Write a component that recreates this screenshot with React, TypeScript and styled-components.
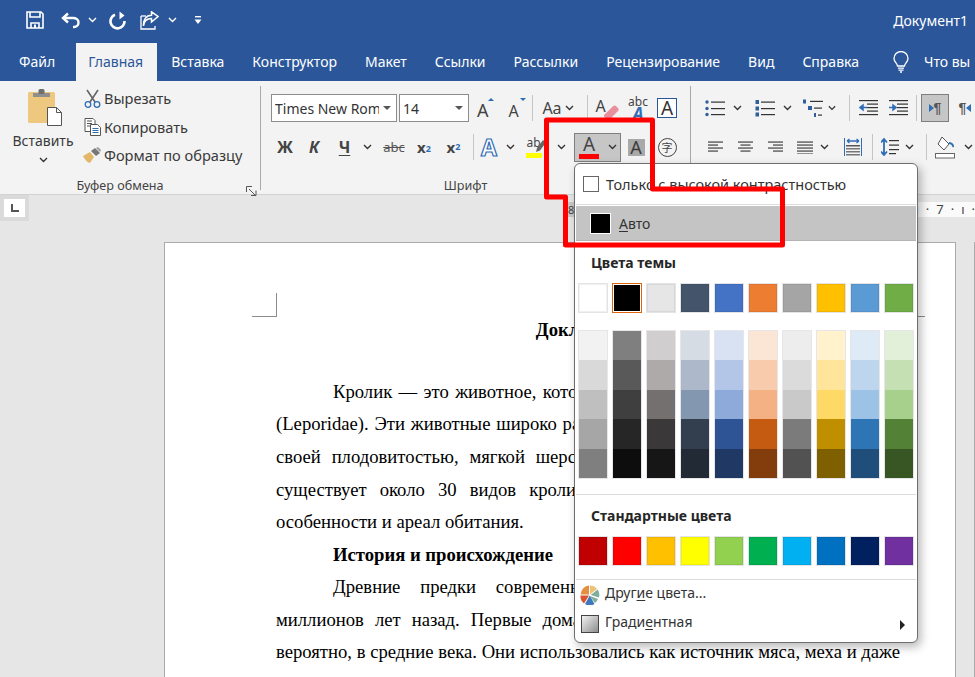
import * as React from "react";
import styled, { createGlobalStyle } from "styled-components";

const UI_FONT = `"Noto Sans", "Open Sans", sans-serif`;
const BLUE = "#2b579a";
const ICON_BLUE = "#2f6db5";
const DARK = "#444444";

const GlobalStyle = createGlobalStyle`
  html, body {
    margin: 0;
    padding: 0;
    overflow: hidden;
    background: #e6e6e6;
  }
`;

const Window = styled.div`
  position: relative;
  width: 975px;
  height: 677px;
  overflow: hidden;
  display: flex;
  flex-direction: column;
  font-family: ${UI_FONT};
  color: #3a3a3a;
`;

/* title bar */
const TitleBar = styled.div`
  flex: none;
  box-sizing: border-box;
  height: 43px;
  background: ${BLUE};
  display: flex;
  align-items: center;
  padding: 0 7px 3px 0;
`;

const QuickSlot = styled.div<{ $w: number; $ml?: number }>`
  flex: none;
  width: ${p => p.$w}px;
  margin-left: ${p => p.$ml || 0}px;
  display: flex;
  justify-content: center;
  align-items: center;
`;

const DocName = styled.div`
  margin-left: auto;
  color: #fff;
  font-size: 14px;
`;

/* tabs */
const TabBar = styled.div`
  flex: none;
  height: 38px;
  background: ${BLUE};
  display: flex;
  padding-left: 5px;
  overflow: hidden;
`;

const Tab = styled.div<{ $active?: boolean }>`
  flex: none;
  display: flex;
  align-items: center;
  padding: ${p => (p.$active ? "0 14px 1px 12px" : "0 14px 1px")};
  font-size: 14px;
  white-space: nowrap;
  color: ${p => (p.$active ? BLUE : "#fff")};
  background: ${p => (p.$active ? "#f3f3f3" : "transparent")};
  margin-left: ${p => (p.$active ? "7px" : "0")};
`;

const TabIcon = styled.div`
  flex: none;
  display: flex;
  align-items: center;
  margin-left: 19px;
`;

/* ribbon */
const Ribbon = styled.div`
  flex: none;
  height: 114px;
  background: #f3f3f3;
  border-bottom: 1px solid #d2d2d2;
  box-sizing: border-box;
  display: flex;
`;

const Group = styled.div<{ $w: number; $pl?: number }>`
  position: relative;
  flex: none;
  box-sizing: border-box;
  width: ${p => p.$w}px;
  padding-left: ${p => p.$pl || 0}px;
  margin: 5px 0 5px;
`;

const GroupDivider = styled.div`
  flex: none;
  width: 1px;
  margin: 5px 0 4px;
  background: #a9a9a9;
`;

const GroupLabel = styled.div<{ $w: number }>`
  position: absolute;
  top: 91px;
  left: 0;
  width: ${p => p.$w}px;
  text-align: center;
  font-size: 12.6px;
  line-height: 17px;
  color: #444;
`;

const Launcher = styled.div`
  position: absolute;
  top: 94px;
  right: 3px;
  width: 11px;
  height: 11px;
`;

const ClipboardBody = styled.div`
  display: flex;
`;

const PasteButton = styled.div`
  flex: none;
  width: 76px;
  margin-left: 5px;
  padding-top: 2px;
  display: flex;
  flex-direction: column;
  align-items: center;
  font-size: 14px;
`;

const PasteIconWrap = styled.div`
  margin-left: 6px;
  height: 38px;
`;

const PasteLabel = styled.div`
  margin: 3px 0 4px;
  line-height: 24px;
`;

const ClipboardList = styled.div`
  margin: -2px 0 0 -1px;
  display: flex;
  flex-direction: column;
`;

const ClipboardItem = styled.div`
  height: 28.5px;
  display: flex;
  align-items: center;
  font-size: 14.6px;
  white-space: nowrap;
`;

const ClipIcon = styled.div`
  flex: none;
  width: 24px;
  display: flex;
  justify-content: center;
`;

const ToolRow = styled.div<{ $top: number }>`
  display: flex;
  align-items: center;
  height: 28px;
  margin-top: ${p => p.$top}px;
`;

const Slot = styled.div<{ $w: number; $ml?: number }>`
  flex: none;
  width: ${p => p.$w}px;
  height: 28px;
  margin-left: ${p => p.$ml || 0}px;
  display: flex;
  align-items: center;
  justify-content: center;
`;

const Sep = styled.div`
  flex: none;
  width: 1px;
  height: 26px;
  background: #c6c6c6;
`;

const ComboBox = styled.div<{ $w: number; $ml?: number }>`
  flex: none;
  box-sizing: border-box;
  width: ${p => p.$w}px;
  height: 28px;
  margin-left: ${p => p.$ml || 0}px;
  padding: 0 5px 0 3px;
  border: 1px solid #8c8c8c;
  background: #fff;
  display: flex;
  align-items: center;
  font-size: 14px;
  color: #333;
`;

const ComboText = styled.div`
  flex: 1;
  overflow: hidden;
  white-space: nowrap;
`;

const ComboCaret = styled.div`
  flex: none;
  width: 0;
  height: 0;
  margin-left: 4px;
  border-left: 4px solid transparent;
  border-right: 4px solid transparent;
  border-top: 4px solid #555;
`;

const Glyph = styled.span<{
  $size: number;
  $bold?: boolean;
  $italic?: boolean;
  $color?: string;
}>`
  font-size: ${p => p.$size}px;
  line-height: 1;
  font-weight: ${p => (p.$bold ? 700 : 400)};
  font-style: ${p => (p.$italic ? "italic" : "normal")};
  color: ${p => p.$color || DARK};
`;

const Underlined = styled.span`
  text-decoration: underline;
  text-underline-offset: 2px;
`;

const Struck = styled.span`
  font-size: 13px;
  color: #555;
  text-decoration: line-through;
`;

const ScriptDigit = styled.span`
  font-size: 9px;
  font-weight: 700;
  color: ${ICON_BLUE};
`;

const SuperDigit = styled(ScriptDigit)`
  align-self: flex-start;
  margin-top: 7px;
`;

const SubDigit = styled(ScriptDigit)`
  align-self: flex-end;
  margin-bottom: 6px;
`;

const GrowWrap = styled.div`
  position: relative;
  width: 17px;
  height: 22px;
  display: flex;
  align-items: flex-end;
`;

const GrowCaret = styled.div<{ $down?: boolean }>`
  position: absolute;
  top: 1px;
  right: 0;
  width: 0;
  height: 0;
  border-left: 3px solid transparent;
  border-right: 3px solid transparent;
  border-bottom: ${p => (p.$down ? "0" : `3px solid ${ICON_BLUE}`)};
  border-top: ${p => (p.$down ? `3px solid ${ICON_BLUE}` : "0")};
`;

const BoxedA = styled.div`
  box-sizing: border-box;
  width: 20px;
  height: 20px;
  border: 1px solid ${BLUE};
  background: #fff;
  display: flex;
  align-items: center;
  justify-content: center;
  font-size: 19px;
  line-height: 1;
  color: #333;
`;

const ShadedA = styled.div`
  width: 17px;
  height: 17px;
  background: #a9a9a9;
  display: flex;
  align-items: center;
  justify-content: center;
  font-size: 18px;
  line-height: 1;
  color: #3c3c3c;
`;

const EffectA = styled.span`
  font-size: 23px;
  line-height: 1;
  font-weight: 700;
  color: #fff;
  -webkit-text-stroke: 1.2px ${ICON_BLUE};
`;

const AbcStack = styled.div`
  display: flex;
  flex-direction: column;
  align-items: center;
  line-height: 10px;
  font-size: 12px;
  color: #444;
`;

const AbcBlueA = styled.span`
  font-size: 17px;
  line-height: 13px;
  font-weight: 700;
  font-style: italic;
  color: ${ICON_BLUE};
`;

const StackIcon = styled.div`
  position: relative;
  width: 21px;
  height: 24px;
`;

const SmallText = styled.span<{ $left: number; $top: number; $size: number }>`
  position: absolute;
  left: ${p => p.$left}px;
  top: ${p => p.$top}px;
  font-size: ${p => p.$size}px;
  line-height: 1;
  color: #444;
`;

const HighlightBar = styled.div`
  position: absolute;
  left: 0;
  bottom: 1px;
  width: 16px;
  height: 5px;
  background: #ffff00;
`;

const FontColorButton = styled.div`
  flex: none;
  box-sizing: border-box;
  width: 47px;
  height: 29px;
  margin-left: 8px;
  background: #c6c6c6;
  border: 1px solid #7f7f7f;
  display: flex;
  align-items: center;
  padding-left: 4px;
  gap: 9px;
`;

const FontColorStack = styled.div`
  width: 20px;
  display: flex;
  flex-direction: column;
  align-items: center;
`;

const ColorBar = styled.div`
  width: 20px;
  height: 5px;
  background: #ff0000;
`;

const CircledChar = styled.div`
  box-sizing: border-box;
  width: 19px;
  height: 19px;
  border: 1px solid #444;
  border-radius: 50%;
  display: flex;
  align-items: center;
  justify-content: center;
  font-family: "Noto Sans CJK SC", sans-serif;
  font-size: 11px;
  line-height: 1;
  color: #444;
`;

const PressedButton = styled.div`
  flex: none;
  box-sizing: border-box;
  width: 28px;
  height: 28px;
  margin-left: 4px;
  border: 1px solid #7f7f7f;
  background: #c6c6c6;
  display: flex;
  align-items: center;
  justify-content: center;
`;

const ParaMark = styled.span<{ $color?: string }>`
  font-size: 14px;
  font-weight: 700;
  line-height: 1;
  font-family: "Liberation Sans", sans-serif;
  color: ${p => p.$color || "#555"};
`;

const ParaCaret = styled.span<{ $left?: boolean }>`
  width: 0;
  height: 0;
  border-top: 4px solid transparent;
  border-bottom: 4px solid transparent;
  ${p =>
    p.$left
      ? `border-right: 5px solid ${ICON_BLUE};`
      : `border-left: 5px solid ${ICON_BLUE};`}
`;

/* document area */
const Canvas = styled.div`
  flex: 1;
  min-height: 0;
  background: #e6e6e6;
  display: flex;
  flex-direction: column;
`;

const RulerRow = styled.div`
  flex: none;
  height: 26px;
  display: flex;
  align-items: flex-start;
`;

const TabStopBox = styled.div`
  flex: none;
  box-sizing: border-box;
  width: 29px;
  height: 26px;
  background: #fff;
  border: 4px solid #dadada;
  display: flex;
  align-items: center;
  justify-content: center;
`;

const RulerTrack = styled.div`
  margin-left: auto;
  margin-top: 7px;
  width: 410px;
  height: 15px;
  background: #fafafa;
  display: flex;
  align-items: center;
  font-size: 13px;
  line-height: 1;
  color: #444;
`;

const RulerMargin = styled.div`
  width: 10px;
  height: 100%;
  background: #c8c8c8;
  font-size: 11px;
  line-height: 15px;
  text-indent: 3px;
`;

const RulerTicks = styled.div`
  margin-left: auto;
  width: 58px;
  display: flex;
  justify-content: flex-end;
  gap: 7px;
`;

const PagesRow = styled.div`
  flex: 1;
  min-height: 0;
  display: flex;
  padding: 21px 0 0 164px;
  gap: 18px;
  overflow: hidden;
`;

const Page = styled.div`
  position: relative;
  flex: none;
  box-sizing: border-box;
  width: 792px;
  background: #fff;
  border: 1px solid #ababab;
  border-bottom: 0;
  padding: 71px 55px 0 111px;
`;

const NextPage = styled(Page)`
  width: 40px;
  padding: 0;
`;

const CropMark = styled.div<{ $right?: boolean }>`
  position: absolute;
  top: 50px;
  ${p => (p.$right ? "left: 735px;" : "left: 87px;")}
  width: 24px;
  height: 23px;
  border-bottom: 1px solid #8c8c8c;
  ${p =>
    p.$right ? "border-left: 1px solid #8c8c8c;" : "border-right: 1px solid #8c8c8c;"}
`;

const DocGap = styled.div`
  height: 29.4px;
`;

const DocLine = styled.p<{
  $indent?: boolean;
  $justify?: boolean;
  $bold?: boolean;
  $center?: boolean;
}>`
  margin: 0;
  height: 32.55px;
  line-height: 32.55px;
  font-family: "Liberation Serif", "Times New Roman", serif;
  font-size: 18.67px;
  color: #000;
  font-weight: ${p => (p.$bold ? 700 : 400)};
  text-indent: ${p => (p.$indent ? "57px" : "0")};
  text-align: ${p => (p.$center ? "center" : p.$justify ? "justify" : "left")};
  text-align-last: ${p => (p.$center ? "center" : p.$justify ? "justify" : "left")};
`;

/* colour menu */
const ColorMenu = styled.div`
  position: absolute;
  left: 574px;
  top: 163px;
  box-sizing: border-box;
  width: 344px;
  height: 480px;
  background: #fff;
  border: 1px solid #6e6e6e;
  border-radius: 6px;
  box-shadow: 3px 4px 10px rgba(0, 0, 0, 0.28);
  display: flex;
  flex-direction: column;
  font-size: 14px;
  color: #333;
`;

const ContrastRow = styled.div`
  flex: none;
  box-sizing: border-box;
  height: 40px;
  display: flex;
  align-items: center;
  padding: 0 0 1px 8px;
  gap: 7px;
  white-space: nowrap;
  font-size: 14.5px;
`;

const CheckBox = styled.div`
  flex: none;
  box-sizing: border-box;
  width: 16px;
  height: 16px;
  border: 1px solid #666;
  background: #fff;
`;

const MenuSep = styled.div<{ $mt?: number }>`
  flex: none;
  height: 1px;
  margin: ${p => p.$mt || 0}px 1px 0;
  background: #dcdcdc;
`;

const AutoRow = styled.div`
  flex: none;
  height: 35px;
  margin: 1px 1px 0 1px;
  background: #c4c4c4;
  border-bottom: 1px solid #b4b4b4;
  box-sizing: border-box;
  display: flex;
  align-items: center;
  padding-left: 14px;
  gap: 8px;
`;

const AutoSwatch = styled.div`
  box-sizing: border-box;
  width: 21px;
  height: 21px;
  background: #000;
  border: 1px solid #fff;
`;

const SectionTitle = styled.div<{ $h: number }>`
  flex: none;
  height: ${p => p.$h}px;
  display: flex;
  align-items: center;
  padding-left: 16px;
  font-weight: 700;
  font-size: 14px;
  color: #262626;
`;

const SwatchGrid = styled.div<{ $mt?: number }>`
  flex: none;
  display: grid;
  grid-template-columns: repeat(10, 30px);
  column-gap: 4px;
  margin: ${p => p.$mt || 0}px 0 0 3px;
`;

const Swatch = styled.div<{ $color: string; $selected?: boolean }>`
  box-sizing: border-box;
  height: 30px;
  background: ${p => p.$color};
  border: 1px solid ${p => (p.$selected ? "#e0640c" : "#e3e3e8")};
  box-shadow: ${p =>
    p.$selected ? "inset 0 0 0 1px #fff" : "inset 0 0 0 1px rgba(0, 0, 0, 0.06)"};
`;

const ShadeColumn = styled.div`
  box-sizing: border-box;
  height: 149px;
  border: 1px solid #e6e6ea;
  display: flex;
  flex-direction: column;
`;

const ShadeCell = styled.div<{ $color: string }>`
  flex: 1;
  background: ${p => p.$color};
`;

const ActionRow = styled.div<{ $h: number }>`
  position: relative;
  flex: none;
  height: ${p => p.$h}px;
  display: flex;
  align-items: center;
  padding-left: 4px;
  gap: 5px;
`;

const ActionIcon = styled.div`
  flex: none;
  width: 21px;
  margin-top: 2px;
  display: flex;
  justify-content: center;
`;

const ActionLabel = styled.span`
  margin-bottom: 2px;
`;

const SubmenuArrow = styled.div`
  position: absolute;
  right: 12px;
  top: 13px;
  width: 0;
  height: 0;
  border-top: 5px solid transparent;
  border-bottom: 5px solid transparent;
  border-left: 5px solid #222;
`;

const Annotation = styled.svg`
  position: absolute;
  left: 0;
  top: 0;
  pointer-events: none;
`;

/* icons */
const Chevron: React.FC<{ color?: string }> = ({ color = "#333" }) => (
  <svg width="9" height="6" viewBox="0 0 9 6" fill="none">
    <polyline points="1,1 4.5,4.5 8,1" stroke={color} strokeWidth="1.4" />
  </svg>
);

const SaveIcon = () => (
  <svg width="18" height="18" viewBox="0 0 18 18" fill="none" stroke="#fff" strokeWidth="1.6">
    <path d="M1 1h14l2 2v14H1z" />
    <path d="M4 1v5h10V1" />
    <path d="M5 17v-5h8v5" />
    <path d="M8 13.5h2v3.5H8z" fill="#fff" stroke="none" />
  </svg>
);

const UndoIcon = () => (
  <svg width="20" height="17" viewBox="0 0 20 17" fill="none" stroke="#fff" strokeWidth="2.4">
    <path d="M7 1.5L2 6l5 4.5" />
    <path d="M2 6h10c3 0 5.500 1.800 5.500 4.500S15.500 15 13 15h-1" />
  </svg>
);

const RedoIcon = () => (
  <svg width="18" height="19" viewBox="0 0 18 19" fill="none" stroke="#fff" strokeWidth="2.6">
    <path d="M6 3.800A7 7 0 1 0 15.500 10" />
    <path d="M10.500 0.500v8l5 -4z" fill="#fff" stroke="none" />
  </svg>
);

const ShareIcon = () => (
  <svg width="19" height="19" viewBox="0 0 19 19" fill="none" stroke="#fff" strokeWidth="1.300">
    <path d="M1 5v13h14v-3" />
    <path d="M1 5h5" />
    <path d="M3.500 15c.5-5 3.500-7.500 8-7.500V11L18 5.500 11.500 0.800v3.400C6 4.200 3 9 3.500 15z" strokeWidth="1.500" />
  </svg>
);

const CustomizeIcon = () => (
  <svg width="8" height="9" viewBox="0 0 8 9" fill="#fff">
    <rect x="1" y="0" width="6" height="1.400" />
    <path d="M0.500 3.500h7L4 8z" />
  </svg>
);

const BulbIcon = () => (
  <svg width="18" height="22" viewBox="0 0 18 22" fill="none" stroke="#fff" strokeWidth="1.300">
    <path d="M5.500 15c0-2.500-3.500-4-3.500-7.500a7 7 0 0 1 14 0c0 3.500-3.500 5-3.500 7.500z" />
    <path d="M6 17.200h6M6.500 19.200h5M8 21h2" />
  </svg>
);

const PasteIcon = () => (
  <svg width="36" height="38" viewBox="0 0 36 38">
    <rect x="0" y="4" width="27" height="31" rx="1.500" fill="#edc87e" />
    <path d="M5 5h17v4H5z" fill="#8f8f8f" />
    <rect x="10.500" y="1" width="6" height="5" rx="1.500" fill="#6f6f6f" />
    <path d="M19.500 19.500h9l5 5v13h-14z" fill="#fff" stroke="#555" />
    <path d="M28.500 19.500v5h5" fill="none" stroke="#555" />
  </svg>
);

const ScissorsIcon = () => (
  <svg width="17" height="19" viewBox="0 0 17 19" fill="none">
    <path d="M3 1l8 12M14 1L6 13" stroke="#666" strokeWidth="1.600" />
    <circle cx="4" cy="15.500" r="2.800" stroke={ICON_BLUE} strokeWidth="1.300" />
    <circle cx="13" cy="15.500" r="2.800" stroke={ICON_BLUE} strokeWidth="1.300" />
  </svg>
);

const CopyIcon = () => (
  <svg width="17" height="18" viewBox="0 0 17 18" fill="#fff" stroke="#555">
    <path d="M1 .5h8l2 2v11H1z" />
    <path d="M3 3h5M3 5.500h5M3 8h5" />
    <path d="M6.500 6.500h7l3 3v8h-10z" />
    <path d="M8.500 10.500h6M8.500 12.500h6M8.500 14.500h6" stroke={ICON_BLUE} />
  </svg>
);

const PainterIcon = () => (
  <svg width="18" height="16" viewBox="0 0 18 16">
    <path d="M0 9l7-4 4 5-4 6c-2 0-5-3-7-7z" fill="#e2b769" />
    <path d="M8 4l4-3 5 5-4 3z" fill="#777" />
    <path d="M13 1l2-1 3 3-1 2z" fill="#a0a0a0" />
  </svg>
);

const LauncherIcon = () => (
  <svg width="11" height="11" viewBox="0 0 11 11" fill="none" stroke="#555">
    <path d="M.5 6V.5H6" />
    <path d="M3 3l6 6M5 9.500h5v-5" />
  </svg>
);

const TabStopIcon = () => (
  <svg width="8" height="8" viewBox="0 0 8 8" fill="#555">
    <path d="M0 0h2v6h6v2H0z" />
  </svg>
);

const EraserIcon = () => (
  <svg width="15" height="15" viewBox="0 0 15 15">
    <path d="M0 10L9 1.200c1-1 2.200-1 3.200 0L14 3c.9.900.9 2 0 3l-8 8c-.9.900-2 .9-3 0L0 11.500z" fill="#e8909c" />
  </svg>
);

const PenIcon = () => (
  <svg width="12" height="14" viewBox="0 0 12 14">
    <path d="M1 13l1-4 6-8 3 2.500-6 8z" fill="#666" />
  </svg>
);

const BULLET_LINES = [3, 9.500, 15.500];

const BulletsIcon = () => (
  <svg width="20" height="19" viewBox="0 0 20 19">
    {BULLET_LINES.map(y => (
      <React.Fragment key={y}>
        <circle cx="2" cy={y} r="1.700" fill="#2f5f9e" />
        <rect x="6" y={y - 0.5} width="14" height="1.200" fill="#333" />
      </React.Fragment>
    ))}
  </svg>
);

const NumberingIcon = () => (
  <svg width="20" height="19" viewBox="0 0 20 19">
    {BULLET_LINES.map(y => (
      <React.Fragment key={y}>
        <rect x="0.500" y={y - 2} width="3.500" height="4" fill="#2f5f9e" />
        <rect x="6" y={y - 0.5} width="14" height="1.200" fill="#333" />
      </React.Fragment>
    ))}
  </svg>
);

const MultilevelIcon = () => (
  <svg width="20" height="19" viewBox="0 0 20 19">
    <rect x="0" y="0.500" width="3" height="4" fill="#2f5f9e" />
    <rect x="7" y="1.800" width="13" height="1.200" fill="#333" />
    <rect x="5" y="7" width="4" height="4" fill="#2f5f9e" />
    <rect x="11" y="8.500" width="8" height="1.200" fill="#333" />
    <rect x="11" y="14" width="2" height="4" fill="#2f5f9e" />
    <rect x="15" y="15.500" width="4" height="1.200" fill="#333" />
  </svg>
);

const INDENT_LINES = [0, 3.500, 7, 10.500, 14];

const IndentIcon: React.FC<{ flip?: boolean }> = ({ flip }) => (
  <svg width="19" height="16" viewBox="0 0 19 16">
    {INDENT_LINES.map((y, i) => (
      <rect
        key={y}
        x={i === 0 || i === 4 ? 0 : 8}
        y={y}
        width={i === 0 || i === 4 ? 19 : 11}
        height="1.200"
        fill="#333"
      />
    ))}
    {flip ? (
      <path d="M0 7h3.500V4L8 7.500 3.500 11V8H0z" fill={ICON_BLUE} stroke={ICON_BLUE} strokeWidth=".5" />
    ) : (
      <path d="M8 7H4.500V4L0 7.500 4.500 11V8H8z" fill={ICON_BLUE} stroke={ICON_BLUE} strokeWidth=".5" />
    )}
  </svg>
);

const AlignIcon: React.FC<{ kind: "left" | "center" | "right" | "justify" }> = ({ kind }) => {
  const w = kind === "justify" ? 16 : 15;
  const lines = [0, 3, 6, 9, ...(kind === "justify" ? [12] : [])];
  return (
    <svg width={w} height="13" viewBox={`0 0 ${w} 13`}>
      {lines.map((y, i) => {
        const short = kind !== "justify" && i % 2 === 1;
        const lw = short ? 10 : w;
        const x = kind === "left" || !short ? 0 : kind === "center" ? (w - lw) / 2 : w - lw;
        return <rect key={y} x={x} y={y + 0.5} width={lw} height="1.100" fill="#333" />;
      })}
    </svg>
  );
};

const DistributeIcon = () => (
  <svg width="18" height="18" viewBox="0 0 18 18">
    <path d="M.5 0v18M17.500 0v18" stroke={ICON_BLUE} />
    <path d="M3 3h12M3 3l2.500-2M3 3l2.500 2M15 3l-2.500-2M15 3l-2.500 2" stroke={ICON_BLUE} strokeWidth="1.300" fill="none" />
    <rect x="2" y="7" width="14" height="1.500" fill="#555" />
    <rect x="2" y="10" width="14" height="1.500" fill="#777" />
    <rect x="2" y="13" width="14" height="1.500" fill="#777" />
    <rect x="2" y="16" width="14" height="1.500" fill="#777" />
  </svg>
);

const LineSpacingIcon = () => (
  <svg width="18" height="18" viewBox="0 0 18 18">
    <path d="M3 1v16M0 4.500L3 1l3 3.500M0 13.500L3 17l3-3.500" stroke={ICON_BLUE} strokeWidth="1.800" fill="none" />
    <rect x="8" y="2" width="10" height="1.200" fill="#333" />
    <rect x="8" y="6.500" width="10" height="1.200" fill="#333" />
    <rect x="8" y="11" width="10" height="1.200" fill="#333" />
    <rect x="8" y="15" width="7" height="1.200" fill="#333" />
  </svg>
);

const ShadingIcon = () => (
  <svg width="20" height="23" viewBox="0 0 20 23" fill="none">
    <path d="M7 1l7 7-5 6-6-6z" fill="#fff" stroke="#555" />
    <path d="M14 6c2 0 4.500 1 5 4 .2 1.500-1.500 2-2 0-.3-1-1-2-3-2z" fill={ICON_BLUE} />
    <rect x=".5" y="17.500" width="19" height="4.500" fill="#fff" stroke="#666" />
  </svg>
);

const PaletteIcon = () => (
  <svg width="20" height="20" viewBox="0 0 20 20">
    <path d="M10 9.500V.5a9 9 0 0 1 7 3.400z" fill="#edc37a" />
    <path d="M10.800 10l6.800-5.400a9 9 0 0 1 1.300 8z" fill="#7faf9b" />
    <path d="M10 11l8 3a9 9 0 0 1-3 4z" fill="#7faf9b" />
    <path d="M9.800 10.500L14.500 19a9 9 0 0 1-9.500 0z" fill="#3f78bd" />
    <path d="M9 10.500L4 18.500a9 9 0 0 1-3.500-8z" fill="#d9552e" />
    <path d="M9 9.500H.7A9 9 0 0 1 9 .6z" fill="#e68f42" />
  </svg>
);

const GradientIcon = () => (
  <svg width="18" height="18" viewBox="0 0 18 18">
    <defs>
      <linearGradient id="gradientSwatch" x1="0" y1="0" x2="1" y2="1">
        <stop offset="0" stopColor="#f5f5f5" />
        <stop offset="1" stopColor="#8a8a8a" />
      </linearGradient>
    </defs>
    <rect x=".5" y=".5" width="17" height="17" fill="url(#gradientSwatch)" stroke="#444" />
  </svg>
);

/* data */
const TABS_AFTER = [
  "Вставка",
  "Конструктор",
  "Макет",
  "Ссылки",
  "Рассылки",
  "Рецензирование",
  "Вид",
  "Справка",
];

const THEME_COLORS = [
  "#ffffff",
  "#000000",
  "#e7e6e6",
  "#44546a",
  "#4472c4",
  "#ed7d31",
  "#a5a5a5",
  "#ffc000",
  "#5b9bd5",
  "#70ad47",
];

const THEME_SHADES = [
  ["#f2f2f2", "#d9d9d9", "#bfbfbf", "#a6a6a6", "#7f7f7f"],
  ["#7f7f7f", "#595959", "#3f3f3f", "#262626", "#0d0d0d"],
  ["#d0cece", "#aeaaaa", "#757070", "#3a3838", "#171616"],
  ["#d6dce4", "#adb9ca", "#8497b0", "#333f4f", "#222a35"],
  ["#d9e2f3", "#b4c6e7", "#8eaadb", "#2f5496", "#1f3864"],
  ["#fbe5d5", "#f7cbac", "#f4b183", "#c55a11", "#833c0b"],
  ["#ededed", "#dbdbdb", "#c9c9c9", "#7b7b7b", "#525252"],
  ["#fff2cc", "#fee599", "#ffd965", "#bf8f00", "#7f6000"],
  ["#deeaf6", "#bdd6ee", "#9cc3e5", "#2e75b5", "#1e4e79"],
  ["#e2efd9", "#c5e0b3", "#a8d08d", "#538135", "#375623"],
];

const STANDARD_COLORS = [
  "#c00000",
  "#ff0000",
  "#ffc000",
  "#ffff00",
  "#92d050",
  "#00b050",
  "#00b0f0",
  "#0070c0",
  "#002060",
  "#7030a0",
];

const TitleArea = () => (
  <>
    <TitleBar>
      <QuickSlot $w={18} $ml={26}>
        <SaveIcon />
      </QuickSlot>
      <QuickSlot $w={20} $ml={17}>
        <UndoIcon />
      </QuickSlot>
      <QuickSlot $w={10} $ml={6}>
        <Chevron color="#fff" />
      </QuickSlot>
      <QuickSlot $w={18} $ml={12}>
        <RedoIcon />
      </QuickSlot>
      <QuickSlot $w={19} $ml={13}>
        <ShareIcon />
      </QuickSlot>
      <QuickSlot $w={10} $ml={8}>
        <Chevron color="#fff" />
      </QuickSlot>
      <QuickSlot $w={8} $ml={17}>
        <CustomizeIcon />
      </QuickSlot>
      <DocName>Документ1</DocName>
    </TitleBar>
    <TabBar>
      <Tab>Файл</Tab>
      <Tab $active>Главная</Tab>
      {TABS_AFTER.map(t => (
        <Tab key={t}>{t}</Tab>
      ))}
      <TabIcon>
        <BulbIcon />
      </TabIcon>
      <Tab>Что вы</Tab>
    </TabBar>
  </>
);

const ClipboardGroup = () => (
  <Group $w={260}>
    <ClipboardBody>
      <PasteButton>
        <PasteIconWrap>
          <PasteIcon />
        </PasteIconWrap>
        <PasteLabel>Вставить</PasteLabel>
        <Chevron />
      </PasteButton>
      <ClipboardList>
        <ClipboardItem>
          <ClipIcon>
            <ScissorsIcon />
          </ClipIcon>
          Вырезать
        </ClipboardItem>
        <ClipboardItem>
          <ClipIcon>
            <CopyIcon />
          </ClipIcon>
          Копировать
        </ClipboardItem>
        <ClipboardItem>
          <ClipIcon>
            <PainterIcon />
          </ClipIcon>
          Формат по образцу
        </ClipboardItem>
      </ClipboardList>
    </ClipboardBody>
    <GroupLabel $w={240}>Буфер обмена</GroupLabel>
    <Launcher>
      <LauncherIcon />
    </Launcher>
  </Group>
);

const FontGroup = () => (
  <Group $w={429} $pl={10}>
    <ToolRow $top={8}>
      <ComboBox $w={126}>
        <ComboText>Times New Rom</ComboText>
        <ComboCaret />
      </ComboBox>
      <ComboBox $w={70} $ml={2}>
        <ComboText>14</ComboText>
        <ComboCaret />
      </ComboBox>
      <Slot $w={33}>
        <GrowWrap>
          <Glyph $size={18}>A</Glyph>
          <GrowCaret />
        </GrowWrap>
      </Slot>
      <Slot $w={30}>
        <GrowWrap>
          <Glyph $size={16}>A</Glyph>
          <GrowCaret $down />
        </GrowWrap>
      </Slot>
      <Sep />
      <Slot $w={54}>
        <Glyph $size={16}>Aa</Glyph>
        <Slot $w={16}>
          <Chevron />
        </Slot>
      </Slot>
      <Sep />
      <Slot $w={36}>
        <StackIcon>
          <SmallText $left={0} $top={2} $size={16}>
            A
          </SmallText>
          <SmallText $left={8} $top={9} $size={15}>
            <EraserIcon />
          </SmallText>
        </StackIcon>
      </Slot>
      <Slot $w={28}>
        <AbcStack>
          abc
          <AbcBlueA>A</AbcBlueA>
        </AbcStack>
      </Slot>
      <Slot $w={30}>
        <BoxedA>A</BoxedA>
      </Slot>
    </ToolRow>
    <ToolRow $top={11}>
      <Slot $w={28}>
        <Glyph $size={16} $bold>
          Ж
        </Glyph>
      </Slot>
      <Slot $w={30}>
        <Glyph $size={16} $bold $italic>
          К
        </Glyph>
      </Slot>
      <Slot $w={31}>
        <Glyph $size={16} $bold>
          <Underlined>Ч</Underlined>
        </Glyph>
      </Slot>
      <Slot $w={14}>
        <Chevron />
      </Slot>
      <Slot $w={40}>
        <Struck>abc</Struck>
      </Slot>
      <Slot $w={20}>
        <Glyph $size={15} $bold>
          x
        </Glyph>
        <SubDigit>2</SubDigit>
      </Slot>
      <Slot $w={39}>
        <Glyph $size={15} $bold>
          x
        </Glyph>
        <SuperDigit>2</SuperDigit>
      </Slot>
      <Sep />
      <Slot $w={30}>
        <EffectA>A</EffectA>
      </Slot>
      <Slot $w={12}>
        <Chevron />
      </Slot>
      <Slot $w={40}>
        <StackIcon>
          <SmallText $left={1} $top={2} $size={12}>
            ab
          </SmallText>
          <SmallText $left={9} $top={4} $size={12}>
            <PenIcon />
          </SmallText>
          <HighlightBar />
        </StackIcon>
      </Slot>
      <Slot $w={10}>
        <Chevron />
      </Slot>
      <FontColorButton>
        <FontColorStack>
          <Glyph $size={19}>A</Glyph>
          <ColorBar />
        </FontColorStack>
        <Chevron />
      </FontColorButton>
      <Slot $w={30}>
        <ShadedA>A</ShadedA>
      </Slot>
      <Slot $w={32}>
        <CircledChar>字</CircledChar>
      </Slot>
    </ToolRow>
    <GroupLabel $w={409}>Шрифт</GroupLabel>
  </Group>
);

const ParagraphGroup = () => (
  <Group $w={284} $pl={8}>
    <ToolRow $top={8}>
      <Slot $w={32}>
        <BulletsIcon />
      </Slot>
      <Slot $w={12}>
        <Chevron />
      </Slot>
      <Slot $w={32} $ml={6}>
        <NumberingIcon />
      </Slot>
      <Slot $w={12}>
        <Chevron />
      </Slot>
      <Slot $w={30} $ml={5}>
        <MultilevelIcon />
      </Slot>
      <Slot $w={8}>
        <Chevron />
      </Slot>
      <Slot $w={13} />
      <Sep />
      <Slot $w={36}>
        <IndentIcon />
      </Slot>
      <Slot $w={24}>
        <IndentIcon flip />
      </Slot>
      <Slot $w={6} />
      <Sep />
      <PressedButton>
        <ParaCaret />
        <ParaMark>¶</ParaMark>
      </PressedButton>
      <Slot $w={24} $ml={4}>
        <ParaMark>¶</ParaMark>
        <ParaCaret $left />
      </Slot>
    </ToolRow>
    <ToolRow $top={11}>
      <Slot $w={32}>
        <AlignIcon kind="left" />
      </Slot>
      <Slot $w={28}>
        <AlignIcon kind="center" />
      </Slot>
      <Slot $w={32}>
        <AlignIcon kind="right" />
      </Slot>
      <Slot $w={28}>
        <AlignIcon kind="justify" />
      </Slot>
      <Slot $w={10}>
        <Chevron />
      </Slot>
      <Slot $w={28} $ml={10}>
        <DistributeIcon />
      </Slot>
      <Slot $w={5} />
      <Sep />
      <Slot $w={28} $ml={3}>
        <LineSpacingIcon />
      </Slot>
      <Slot $w={10}>
        <Chevron />
      </Slot>
      <Slot $w={12} />
      <Sep />
      <Slot $w={36}>
        <ShadingIcon />
      </Slot>
      <Slot $w={10}>
        <Chevron />
      </Slot>
    </ToolRow>
  </Group>
);

const Document = () => (
  <Canvas>
    <RulerRow>
      <TabStopBox>
        <TabStopIcon />
      </TabStopBox>
      <RulerTrack>
        <RulerMargin>8</RulerMargin>
        <RulerTicks>
          <span>ı</span>
          <span>·</span>
          <span>7</span>
          <span>·</span>
          <span>ı</span>
          <span>·</span>
        </RulerTicks>
      </RulerTrack>
    </RulerRow>
    <PagesRow>
      <Page>
        <CropMark />
        <CropMark $right />
        <DocLine $bold $center $indent>
          Доклад о кроликах
        </DocLine>
        <DocGap />
        <DocLine $justify $indent>
          Кролик — это животное, которое принадлежит к семейству зайцевых
        </DocLine>
        <DocLine $justify>
          (Leporidae). Эти животные широко распространены и известны во всём мире
        </DocLine>
        <DocLine $justify>своей плодовитостью, мягкой шерстью и дружелюбным нравом. В мире</DocLine>
        <DocLine $justify>существует около 30 видов кроликов, каждый из которых имеет свои</DocLine>
        <DocLine>особенности и ареал обитания.</DocLine>
        <DocLine $bold $indent>
          История и происхождение
        </DocLine>
        <DocLine $justify $indent>
          Древние предки современных кроликов появились около 40
        </DocLine>
        <DocLine $justify>миллионов лет назад. Первые домашние породы кроликов образовались,</DocLine>
        <DocLine $justify>вероятно, в средние века. Они использовались как источник мяса, меха и даже</DocLine>
      </Page>
      <NextPage />
    </PagesRow>
  </Canvas>
);

const FontColorMenu = () => (
  <ColorMenu>
    <ContrastRow>
      <CheckBox />
      Только с высокой контрастностью
    </ContrastRow>
    <MenuSep />
    <AutoRow>
      <AutoSwatch />
      <span>
        <Underlined>А</Underlined>вто
      </span>
    </AutoRow>
    <SectionTitle $h={42}>Цвета темы</SectionTitle>
    <SwatchGrid>
      {THEME_COLORS.map(c => (
        <Swatch key={c} $color={c} $selected={c === "#000000"} />
      ))}
    </SwatchGrid>
    <SwatchGrid $mt={17}>
      {THEME_SHADES.map(col => (
        <ShadeColumn key={col[0] + col[4]}>
          {col.map(c => (
            <ShadeCell key={c} $color={c} />
          ))}
        </ShadeColumn>
      ))}
    </SwatchGrid>
    <MenuSep $mt={15} />
    <SectionTitle $h={41}>Стандартные цвета</SectionTitle>
    <SwatchGrid>
      {STANDARD_COLORS.map(c => (
        <Swatch key={c} $color={c} />
      ))}
    </SwatchGrid>
    <MenuSep $mt={13} />
    <ActionRow $h={27}>
      <ActionIcon>
        <PaletteIcon />
      </ActionIcon>
      <ActionLabel>
        Друг<Underlined>и</Underlined>е цвета...
      </ActionLabel>
    </ActionRow>
    <ActionRow $h={31}>
      <ActionIcon>
        <GradientIcon />
      </ActionIcon>
      <ActionLabel>
        Гради<Underlined>е</Underlined>нтная
      </ActionLabel>
      <SubmenuArrow />
    </ActionRow>
  </ColorMenu>
);

const App = () => (
  <Window>
    <GlobalStyle />
    <TitleArea />
    <Ribbon>
      <ClipboardGroup />
      <GroupDivider />
      <FontGroup />
      <GroupDivider />
      <ParagraphGroup />
    </Ribbon>
    <Document />
    <FontColorMenu />
    <Annotation width="975" height="677" viewBox="0 0 975 677" fill="none">
      <polygon
        points="546.5,120 652.5,120 652.5,189 782.5,189 782.5,245 565.5,245 565.5,197 546.5,197"
        stroke="#ff0000"
        strokeWidth="5"
        strokeLinejoin="round"
      />
    </Annotation>
  </Window>
);

export default App;
